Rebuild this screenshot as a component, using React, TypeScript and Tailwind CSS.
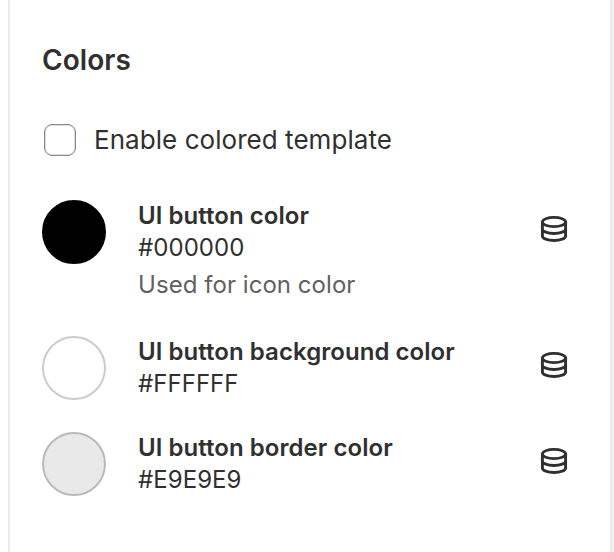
import React from "react";

interface Swatch {
  label: string;
  value: string;
  hint?: string;
  swatchClass: string;
}

const swatches: Swatch[] = [
  {
    label: "UI button color",
    value: "#000000",
    hint: "Used for icon color",
    swatchClass: "bg-black border-black",
  },
  {
    label: "UI button background color",
    value: "#FFFFFF",
    swatchClass: "bg-white border-[#cccccc]",
  },
  {
    label: "UI button border color",
    value: "#E9E9E9",
    swatchClass: "bg-[#e9e9e9] border-[#bababa]",
  },
];

const DatabaseIcon: React.FC = () => (
  <svg width="28" height="28" viewBox="0 0 28 28" fill="none" stroke="#303030" strokeWidth="2.9">
    <ellipse cx="14" cy="7" rx="11.6" ry="4.6" />
    <path d="M2.4 7v13.9c0 2.6 5.2 4.6 11.6 4.6s11.6-2 11.6-4.6V7" />
    <path d="M2.4 14c0 2.5 5.2 4.5 11.6 4.5s11.6-2 11.6-4.5" />
  </svg>
);

const ColorRow: React.FC<{ swatch: Swatch }> = ({ swatch }) => (
  <div className="flex items-start">
    <div className={`size-16 shrink-0 rounded-full border-2 ${swatch.swatchClass}`} />
    <div className="ml-8 flex-1 whitespace-nowrap text-[24px] leading-8 tracking-[0.05px]">
      <p className="font-semibold">{swatch.label}</p>
      <p>{swatch.value}</p>
      {swatch.hint && <p className="mt-[5px] leading-8 text-[#616161]">{swatch.hint}</p>}
    </div>
    <div className="mt-[15px]">
      <DatabaseIcon />
    </div>
  </div>
);

export default function App() {
  return (
    <div className="flex h-[552px] w-[614px] overflow-hidden bg-white font-['Inter',sans-serif] text-[#303030] antialiased">
      <div className="w-2 shrink-0" />
      <div className="w-[604px] border-x-2 border-[#ebebeb] pl-8 pr-[42px] pt-10">
        <h2 className="text-[28px] font-semibold leading-10 tracking-[0.05px]">Colors</h2>
        <label className="mt-10 flex h-10 items-center pl-0.5 text-[26px] tracking-[0.05px]">
          <input
            type="checkbox"
            className="size-8 appearance-none rounded-lg border border-[#8a8a8a] bg-white shadow-[inset_0_0_0_1px_#dcdcdc]"
          />
          <span className="-mt-px ml-[18px] whitespace-nowrap">Enable colored template</span>
        </label>
        <div className="mt-10 flex flex-col">
          {swatches.map((swatch) => (
            <div key={swatch.label} className={swatch.hint ? "h-[136px]" : "h-24"}>
              <ColorRow swatch={swatch} />
            </div>
          ))}
        </div>
      </div>
      <div className="w-0.5 shrink-0 bg-[#f1f1f1]" />
    </div>
  );
}
